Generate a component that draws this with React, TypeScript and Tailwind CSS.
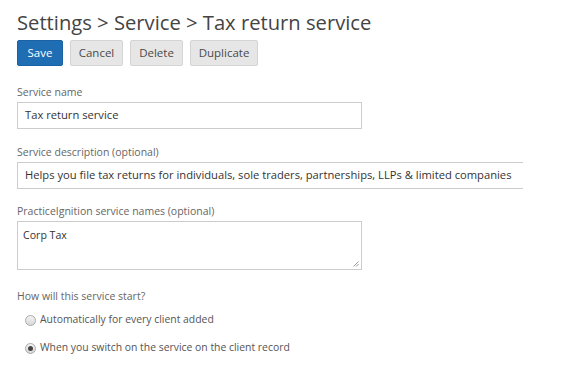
import React, { useState } from "react";

const font = { fontFamily: '"Open Sans", "Liberation Sans", sans-serif' };

const Btn: React.FC<{ primary?: boolean; className?: string; children: React.ReactNode }> = ({
  primary,
  className = "",
  children,
}) => (
  <button
    type="button"
    className={`${className} h-[26px] rounded-[2px] border text-[11.5px] leading-none ${
      primary
        ? "bg-[#1f6db3] border-[#1a62a3] text-white"
        : "bg-[#e6e6e6] border-[#d4d4d4] text-[#4a4a4a]"
    }`}
  >
    {children}
  </button>
);

const Label: React.FC<{ children: React.ReactNode }> = ({ children }) => (
  <p className="text-[10.5px] leading-[14px] text-[#666] mb-[3px]">{children}</p>
);

const Radio: React.FC<{ checked: boolean; label: string; onClick: () => void }> = ({
  checked,
  label,
  onClick,
}) => (
  <label className="flex items-center gap-[4px] h-[14px] text-[10.4px] text-[#555] cursor-pointer" onClick={onClick}>
    <span className="w-[11px] h-[11px] rounded-full border border-[#aaa] bg-gradient-to-b from-[#f4f4f4] to-[#d8d8d8] grid place-content-center">
      {checked ? <span className="w-[5px] h-[5px] rounded-full bg-[#444]"></span> : null}
    </span>
    {label}
  </label>
);

export default function App() {
  const [start, setStart] = useState("manual");
  return (
    <div className="w-[565px] h-[385px] bg-white px-[17px] pt-[9px]" style={font}>
      <h1 className="text-[20.2px] leading-[27px] text-[#444]">Settings &gt; Service &gt; Tax return service</h1>
      <div className="flex gap-[7px] mt-[4px]">
        <Btn primary className="w-[46px]">Save</Btn>
        <Btn className="w-[53px]">Cancel</Btn>
        <Btn className="w-[53px]">Delete</Btn>
        <Btn className="w-[68px]">Duplicate</Btn>
      </div>

      <div className="mt-[19px]">
        <Label>Service name</Label>
        <div className="w-[345px] h-[27px] border border-[#ccc] px-[7px] flex items-center text-[11.2px] text-[#333]">
          Tax return service
        </div>
      </div>

      <div className="mt-[16px]">
        <Label>Service description (optional)</Label>
        <div className="w-[506px] h-[27px] border border-r-0 border-[#ccc] px-[7px] flex items-center text-[11.2px] text-[#333] whitespace-nowrap">
          Helps you file tax returns for individuals, sole traders, partnerships, LLPs &amp; limited companies
        </div>
      </div>

      <div className="mt-[15px]">
        <Label>PracticeIgnition service names (optional)</Label>
        <div className="relative w-[345px] h-[49px] border border-[#ccc] px-[5px] pt-[6px] text-[10.6px] text-[#333]">
          Corp Tax
          <svg className="absolute right-[2px] bottom-[2px]" width="6" height="6" viewBox="0 0 6 6">
            <path d="M5.5 0.5 L0.5 5.5 M5.5 3 L3 5.5" stroke="#999" strokeWidth="1" />
          </svg>
        </div>
      </div>

      <p className="mt-[19px] text-[10.5px] leading-[14px] text-[#666]">How will this service start?</p>
      <div className="flex flex-col gap-[14px] mt-[10px] pl-[8px]">
        <Radio checked={start === "auto"} label="Automatically for every client added" onClick={() => setStart("auto")} />
        <Radio checked={start === "manual"} label="When you switch on the service on the client record" onClick={() => setStart("manual")} />
      </div>
    </div>
  );
}
